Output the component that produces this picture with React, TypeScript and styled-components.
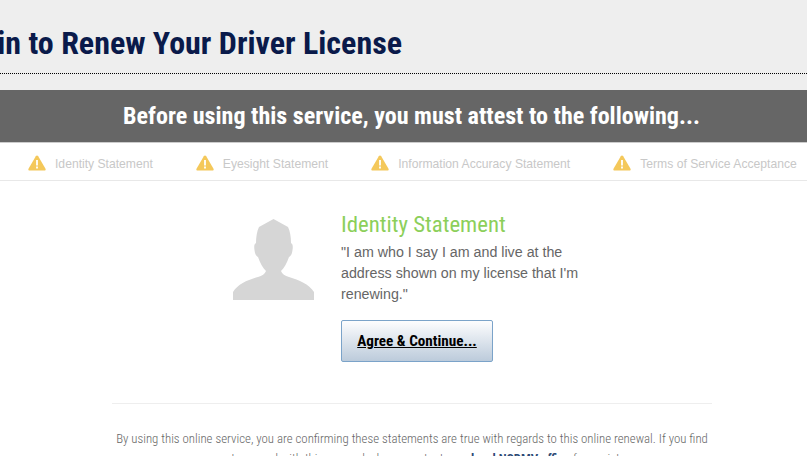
import React from 'react'
import styled, { createGlobalStyle } from 'styled-components'

const GlobalStyle = createGlobalStyle`
  html, body {
    margin: 0;
    padding: 0;
    width: 807px;
    height: 456px;
    overflow: hidden;
    background: #fff;
  }
`

const condensed = `"Roboto Condensed", Roboto, "Liberation Sans", sans-serif`

const Page = styled.div`
  width: 807px;
  height: 456px;
  overflow: hidden;
  font-family: "Liberation Sans", Arial, sans-serif;
`

const Header = styled.header`
  background: #eee;
  height: 90px;
  box-sizing: border-box;
  padding-top: 23px;
`

const TitleRow = styled.div`
  height: 50px;
  display: flex;
  justify-content: flex-end;
  padding-right: 405px;
  border-bottom: 1px dotted #000;
  overflow: hidden;
`

const Title = styled.h1`
  margin: 0;
  font-family: ${condensed};
  font-stretch: 75%;
  font-size: 32px;
  line-height: 41px;
  font-weight: 700;
  color: #0a1a4a;
  white-space: nowrap;
`

const Banner = styled.div`
  height: 52px;
  background: #666;
  border-bottom: 1px solid #ccc;
  display: flex;
  align-items: center;
  justify-content: center;
  padding-left: 16px;
`

const BannerText = styled.h2`
  margin: 0;
  font-family: ${condensed};
  font-stretch: 75%;
  font-size: 24.05px;
  font-weight: 700;
  color: #fff;
  white-space: nowrap;
`

const Steps = styled.nav`
  height: 37px;
  border-bottom: 1px solid #e8e8e8;
  display: flex;
  align-items: center;
  padding-left: 28px;
  gap: 43px;
  white-space: nowrap;
`

const Step = styled.div`
  display: flex;
  align-items: center;
  gap: 9px;
  font-size: 12.15px;
  color: #c8c8c8;
`

const StepLabel = styled.span`
  padding-top: 5px;
`

const WarnSvg = styled.svg`
  flex: none;
  margin-top: 3px;
`

const Main = styled.section`
  display: flex;
  padding: 30px 0 0 233px;
  gap: 27px;
`

const AvatarIcon = styled.svg`
  flex: none;
  margin-top: 8px;
`

const Body = styled.div`
  width: 250px;
`

const Heading = styled.h3`
  margin: 1px 0 4px;
  font-family: ${condensed};
  font-stretch: 75%;
  font-size: 22.8px;
  line-height: 26px;
  font-weight: 400;
  color: #8ccf5a;
  white-space: nowrap;
`

const Quote = styled.p`
  margin: 0 0 15px;
  font-size: 14.25px;
  line-height: 21px;
  color: #666;
`

const AgreeButton = styled.button`
  display: block;
  width: 152px;
  height: 42px;
  padding: 0;
  border: 1px solid #7ba3c9;
  border-radius: 2px;
  background: linear-gradient(#fdfdfe, #bccbdb);
  font-family: ${condensed};
  font-stretch: 75%;
  font-size: 15.2px;
  font-weight: 700;
  color: #000;
  text-decoration: underline;
`

const Divider = styled.hr`
  width: 600px;
  height: 1px;
  margin: 41px 0 0 112px;
  border: 0;
  background: #eee;
`

const Fine = styled.p`
  width: 600px;
  margin: 25px 0 0 112px;
  font-family: ${condensed};
  font-stretch: 75%;
  font-size: 12.85px;
  line-height: 20px;
  font-weight: 300;
  color: #666;
  text-align: center;

  b {
    font-weight: 700;
    color: #2d4a75;
  }
`

function WarnIcon() {
  return (
    <WarnSvg width="18" height="16" viewBox="0 0 18 16">
      <path d="M9 0.5c.5 0 .9.3 1.2.8l7.3 12.4c.5.9 0 1.8-1 1.8H1.5c-1 0-1.5-.9-1-1.8L7.8 1.3C8.1.8 8.5.5 9 .5z" fill="#f4c85a" />
      <rect x="8.1" y="5" width="1.8" height="5.5" fill="#fff" />
      <rect x="8.1" y="11.5" width="1.8" height="2" fill="#fff" />
    </WarnSvg>
  )
}

function Avatar() {
  return (
    <AvatarIcon width="81" height="81" viewBox="0 0 81 81">
      <path
        d="M40.5 0 L55 8 C57 12 58 18 58 24 C60 25 60 28 59.5 31 C59 35 58 37 56 38 C54 44 51 49 48 52 C49 55 52 57 56 58 C66 61 76 65 81 73 L81 81 L0 81 L0 73 C5 65 15 61 25 58 C29 57 32 55 33 52 C30 49 27 44 25 38 C23 37 22 35 21.500 31 C21 28 21 25 23 24 C23 18 24 12 26 8 Z"
        fill="#d6d6d6"
      />
    </AvatarIcon>
  )
}

const stepNames = [
  'Identity Statement',
  'Eyesight Statement',
  'Information Accuracy Statement',
  'Terms of Service Acceptance',
]

export default function App() {
  return (
    <Page>
      <GlobalStyle />
      <Header>
        <TitleRow>
          <Title>Sign in to Renew Your Driver License</Title>
        </TitleRow>
      </Header>
      <Banner>
        <BannerText>Before using this service, you must attest to the following...</BannerText>
      </Banner>
      <Steps>
        {stepNames.map((name) => (
          <Step key={name}>
            <WarnIcon />
            <StepLabel>{name}</StepLabel>
          </Step>
        ))}
      </Steps>
      <Main>
        <Avatar />
        <Body>
          <Heading>Identity Statement</Heading>
          <Quote>"I am who I say I am and live at the address shown on my license that I'm renewing."</Quote>
          <AgreeButton>Agree &amp; Continue...</AgreeButton>
        </Body>
      </Main>
      <Divider />
      <Fine>
        By using this online service, you are confirming these statements are true with regards to this online renewal. If you find
        you can not proceed with this renewal, please contact your <b>local NCDMV office</b> for assistance.
      </Fine>
    </Page>
  )
}
